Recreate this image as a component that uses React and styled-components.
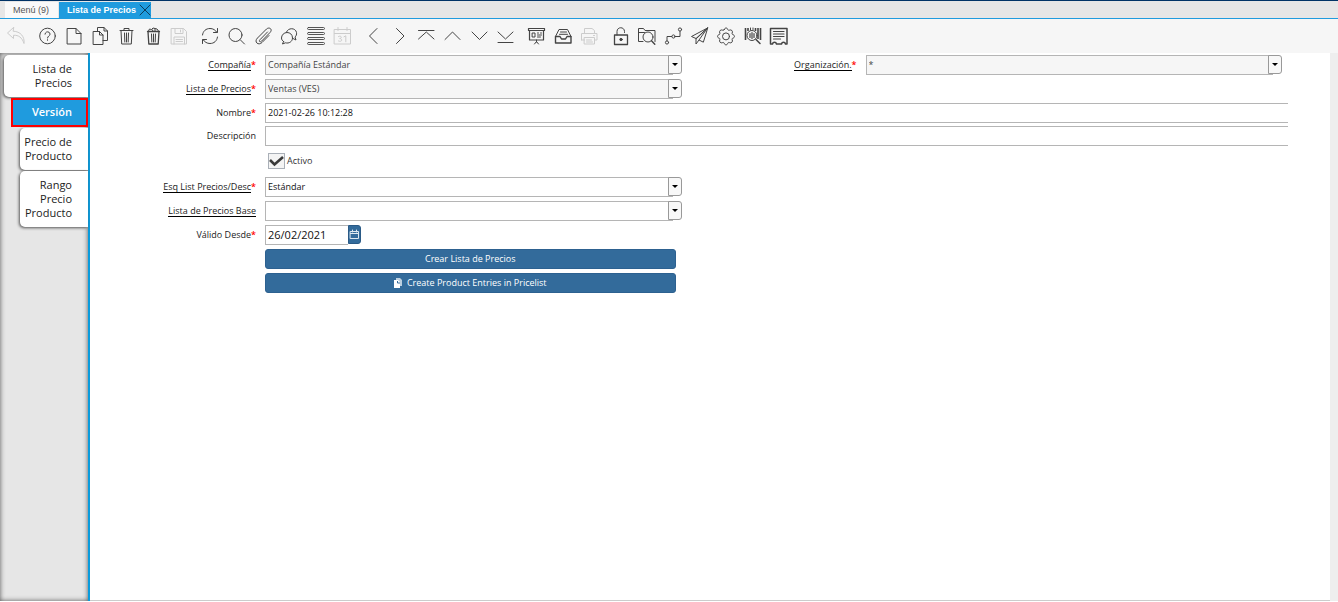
import React from "react";
import styled, { createGlobalStyle, css } from "styled-components";

const Global = createGlobalStyle`
  *, *::before, *::after { box-sizing: border-box; }
  html, body { margin: 0; padding: 0; }
  body {
    background: #fff;
    color: #333;
    font-family: "Open Sans", "Noto Sans", sans-serif;
    font-size: 9px;
    line-height: 14px;
  }
  button, input, select { font: inherit; color: inherit; margin: 0; }
`;

const Page = styled.div`
  min-height: 100vh;
  display: flex;
  flex-direction: column;
`;

/* Window tabs */
const TabBar = styled.nav`
  display: flex;
  gap: 1px;
  height: 19px;
  padding: 1px 5px 0;
  background: #e6e6e6;
  border-top: 1px solid #003366;
  border-bottom: 1px solid #1f9bde;
  font-family: "Liberation Sans", Arial, sans-serif;
`;

const WindowTab = styled.div`
  display: flex;
  align-items: center;
  padding: 0 ${(p) => (p.$active ? "0" : "9px")} 0 8px;
  background: ${(p) => (p.$active ? "#1f9bde" : "#f9f9f9")};
  color: ${(p) => (p.$active ? "#fff" : "#555")};
  font-weight: ${(p) => (p.$active ? "bold" : "normal")};
`;

const TabTitle = styled.button`
  padding: 0;
  border: 0;
  background: none;
`;

const TabClose = styled.button`
  display: flex;
  margin-left: 3px;
  padding: 0;
  border: 0;
  background: none;
  color: #0d3d5c;
`;

/* Toolbar */
const Toolbar = styled.div`
  display: flex;
  align-items: center;
  gap: 7px;
  height: 34px;
  padding-left: 4px;
  background: #f6f6f6;
`;

const ToolGroup = styled.div`
  display: flex;
  justify-content: space-between;
  width: ${(p) => p.$width}px;
`;

const ToolButton = styled.button`
  display: flex;
  align-items: center;
  justify-content: center;
  width: 24px;
  height: 24px;
  padding: 0;
  border: 0;
  background: none;
  color: #444;
  &:disabled { color: #ccc; }
`;

/* Body */
const Body = styled.div`
  flex: 1;
  display: flex;
  margin-bottom: 1px;
`;

const Sidebar = styled.nav`
  display: flex;
  flex-direction: column;
  align-items: flex-end;
  flex: none;
  width: 90px;
  padding-top: 2px;
  background: #e6e6e6;
  border-right: 2px solid #0a9bdc;
  box-shadow: inset 0 0 5px #555;
`;

const SideTab = styled.button`
  width: ${(p) => 84 - p.$level * 8}px;
  padding: 7px 16px 7px 2px;
  border: 0;
  border-radius: 5px 0 0 5px;
  background: #fff;
  box-shadow: -1px 1px 3px #555;
  color: #222;
  font-size: 11px;
  line-height: 14px;
  text-align: right;
  & + & { margin-top: ${(p) => (p.$spaced ? "1px" : "0")}; }
  ${(p) =>
    p.$active &&
    css`
      width: 77px;
      padding: 5px 14px 6px 2px;
      border: 2px solid #ff0000;
      border-radius: 0;
      background: #1f9bde;
      box-shadow: none;
      color: #fff;
      font-weight: 600;
    `}
`;

const Panel = styled.main`
  flex: 1;
  min-width: 0;
  padding: 2px 42px 0 0;
  border-bottom: 1px solid #ccc;
`;

const ScrollTrack = styled.div`
  flex: none;
  width: 8px;
  background: #eee;
`;

const Row = styled.div`
  display: grid;
  grid-template-columns: 166px minmax(0, 1fr) 160px minmax(0, 1fr);
  column-gap: 9px;
  align-items: center;
  padding-bottom: ${(p) => p.$gap || 4}px;
`;

const Label = styled.label`
  text-align: right;
  color: #222;
`;

const LabelText = styled.span`
  ${(p) =>
    p.$link &&
    css`
      border-bottom: 1px solid #000;
      display: inline-block;
      line-height: 10px;
    `}
`;

const Required = styled.span`
  color: #f00;
  font-weight: 600;
`;

const fieldBox = css`
  height: 20px;
  padding: 0 2px;
  border: 1px solid #b5b5b5;
  border-radius: 0;
  background: #fff;
  color: #111;
  outline: 0;
`;

const TextInput = styled.input`
  ${fieldBox}
  width: 100%;
  grid-column: 2 / -1;
  padding-bottom: 1px;
  border-right: 0;
`;

const ComboBox = styled.div`
  display: flex;
  margin-right: 6px;
`;

const ComboSelect = styled.select`
  ${fieldBox}
  flex: 1;
  min-width: 0;
  appearance: none;
  &:disabled {
    background: #f6f6f6;
    color: #444;
    opacity: 1;
  }
`;

const ComboArrow = styled.span`
  display: flex;
  align-items: center;
  justify-content: center;
  flex: none;
  width: 14px;
  height: 19px;
  margin-left: -5px;
  border: 1px solid #999;
  border-radius: 0 3px 3px 0;
  background: #f8f8f8;
  pointer-events: none;
  z-index: 1;
  &::after {
    content: "";
    border: 3px solid transparent;
    border-top-color: #000;
    border-bottom: 0;
  }
`;

const CheckRow = styled.div`
  display: flex;
  align-items: center;
  gap: 2px;
  height: 24px;
  padding: 0 0 1px 3px;
  grid-column: 2;
`;

const CheckMark = styled.span`
  display: grid;
  width: 17px;
  height: 16px;
  svg, input { grid-area: 1 / 1; }
  svg { pointer-events: none; }
`;

const CheckInput = styled.input`
  appearance: none;
  width: 17px;
  height: 16px;
  border: 1px solid #aab0b8;
  background: #f4f4f4;
`;

const DateBox = styled.div`
  display: flex;
  align-items: flex-start;
`;

const DateInput = styled.input`
  ${fieldBox}
  width: 83px;
  padding-bottom: 1px;
  border-right: 0;
  font-size: 11px;
`;

const DateButton = styled.button`
  display: flex;
  align-items: center;
  justify-content: center;
  width: 13px;
  height: 19px;
  padding: 0;
  border: 1px solid #2a5a86;
  border-radius: 0 3px 3px 0;
  background: #336b9b;
  color: #dde8f0;
`;

const ActionButton = styled.button`
  display: flex;
  align-items: center;
  justify-content: center;
  gap: 5px;
  grid-column: 2;
  height: 20px;
  margin-right: 12px;
  padding: 0 0 1px;
  border: 1px solid #2d6190;
  border-radius: 3px;
  background: #336b9b;
  color: #fff;
`;

const Svg = ({ children, size = 20, width = 1 }) => (
  <svg
    width={size}
    height={size}
    viewBox={`0 0 ${size} ${size}`}
    fill="none"
    stroke="currentColor"
    strokeWidth={width}
    strokeLinecap="round"
    strokeLinejoin="round"
    aria-hidden="true"
  >
    {children}
  </svg>
);

const icons = {
  undo: <path d="M7.500 1.500 1.500 7l6 5.500V9.300c5-.3 8.500 2 10.500 8.200.8-7-3.500-12-10.500-12.300z" />,
  help: (
    <>
      <circle cx="10.500" cy="10" r="7.800" />
      <path d="M8 8.200c0-3.200 5-3.200 5 0 0 1.800-2.500 1.800-2.500 3.800M10.500 13.700v.6" />
    </>
  ),
  doc: <path d="M4.500 2.500h8.500l5 5v10.500H4.500zM13 2.500v5h5" />,
  copy: <path d="M7.500 5V1.500H14L17.500 5v9.500H13M14 1.500V5h3.500M3.500 5.500h6L13 9v9.500H3.500zM9.500 5.500V9H13" />,
  trash: <path d="M4 4.500h13M8 4.500V2.500h5v2M5 4.500l.7 13.500h9.600L16 4.500M8.500 7l.3 9M10.500 7v9M12.500 7l-.3 9" />,
  trashFull: (
    <>
      <path d="M4.500 5.500h12M5 5.500 5.800 18h9.400L16 5.500" strokeWidth="1.300" />
      <path d="M5.500 5 6.500 3 8.500 3.500l1.500-1.500 2 .5 2 .5 1.500 2M8.500 8l.3 8M10.500 8v8M12.500 8l-.3 8M9 3.500l1 1.500M12 3v2" />
    </>
  ),
  save: <path d="M2.500 2.500H14.500l3 3v12.500H2.500zM6 2.500v5h8v-5M11.500 4v2M5 18v-7h10.500v7M7 13.500h6.500M7 15.500h6.500" />,
  refresh: <path d="M2.500 9C3 5 6 2.500 10 2.500c3 0 5.500 1.500 7 4M17.500 2.500v4h-4M17.500 11c-.5 4-3.500 6.500-7.500 6.500-3 0-5.500-1.500-7-4M2.500 17.500v-4h4" />,
  search: (
    <>
      <circle cx="9.500" cy="9" r="6.500" />
      <path d="m14.200 13.700 4.300 4.300" />
    </>
  ),
  clip: <path d="m14.500 6-7.500 7.700c-1.500 1.500 0 3 1.500 1.500L17 6.500c3-3-.5-6-3.500-3.500L4.500 12c-4 4 1 8 4.500 4.500L16 9.500" />,
  chat: <path d="M7.500 6C9 1.500 16.500 1.500 17.500 6.500c.4 2-.4 3.500-1.500 4.500l1 3-3-1.500M4.500 15.500 3.500 18l3-1.200c3.500 1 7-1.300 7-4.800S11 6.500 8 6.500s-5.500 2.500-5.500 5.500c0 1.500.8 2.700 2 3.500z" />,
  list: (
    <>
      <rect x="1.500" y="2" width="17" height="3" rx="1.500" />
      <rect x="1.500" y="8.500" width="17" height="3" rx="1.500" />
      <rect x="1.500" y="15" width="17" height="3" rx="1.500" />
    </>
  ),
  calendar: (
    <>
      <path d="M2.500 3.500h16v14.500h-16zM2.500 7.500h16M6 1.500v3M15 1.500v3" />
      <path d="M6.500 10.500c3-1.500 4 1.800 1.200 2 3.300.2 2.300 4.200-1.200 2.500M12 10.800l1.800-1v6" />
    </>
  ),
  left: <path d="M14 2.500 6.500 10l7.500 7.500" />,
  right: <path d="m7.500 2.500 7.500 7.500-7.500 7.500" />,
  first: <path d="M2.500 4.500h15.500M2.500 13 10.300 6 18 13" />,
  up: <path d="m3 13.500 7.500-7.500 7.500 7.500" />,
  down: <path d="m3 6 7.500 7.500L18 6" />,
  last: <path d="m3 6 7.500 7L18 6M3 16.500h15" />,
  board: (
    <>
      <path d="M2.500 2.500h16v2h-16zM3.500 4.500v9.500h14V4.500" strokeWidth="1.200" />
      <path d="M6.500 7H9v4H6.500zM11.500 7h1M14.500 7h1M11.500 9h4M11.500 11h3M10.500 14v2M10.500 15.500 8.500 18M10.500 15.500 12.500 18" />
    </>
  ),
  inbox: (
    <>
      <path d="M2.500 10.500h4.500l1.500 2.500h4l1.500-2.500h4v6.500h-15.500z" strokeWidth="1.400" />
      <path d="M2.500 10.500 6 3.500h8.500l3.500 7M7.500 6h6M6.500 8.300h8" />
    </>
  ),
  print: <path d="M5.500 7V2.500h7.500l2.500 2V7M2.500 14V7.500h15.500V14h-2.500M2.500 14H5.500M5.500 11.500h10V18h-10zM7.500 14h5M7.500 16h6M14.500 9.500h1" />,
  lock: (
    <>
      <path d="M4.500 9h13v9.500h-13z" strokeWidth="1.300" />
      <path d="M7 9V5.500c0-5 7.500-5 7.500 0V6.500" />
      <circle cx="11" cy="13.500" r="1.200" fill="currentColor" />
    </>
  ),
  folder: (
    <>
      <path d="M7 15.500H2.500V2.500h5l1.500 2H19v11M2.500 6.500h6" />
      <circle cx="12" cy="11" r="5" />
      <path d="m15.500 14.700 3.300 3.500" strokeWidth="1.400" />
    </>
  ),
  flow: (
    <>
      <circle cx="4" cy="16.500" r="1.600" />
      <circle cx="10.500" cy="10.500" r="1.600" />
      <circle cx="17" cy="3.500" r="1.600" />
      <path d="M4 14.700V10.500h4.700M12.300 10.500h4.700V5.300" />
    </>
  ),
  send: <path d="M18.500 2 2.500 10.500 7 12.500zM18.500 2 7 12.500V18l3-4 4 2zM18.500 2 10 14" />,
  gear: (
    <>
      <path d="M9.200 3.600c.4-2.200 3.200-2.200 3.600 0 .3.700.8.900 1.500.600 2-1 3.900.9 2.900 2.900-.3.700-.1 1.200.6 1.500 2.200.4 2.200 3.200 0 3.600-.7.300-.9.800-.6 1.500 1 2-.9 3.900-2.900 2.900-.7-.3-1.200-.1-1.500.6-.4 2.200-3.200 2.200-3.600 0-.3-.7-.8-.9-1.500-.6-2 1-3.900-.9-2.900-2.900.3-.7.1-1.200-.6-1.500-2.200-.4-2.200-3.200 0-3.600.7-.3.900-.8.600-1.500-1-2 .9-3.900 2.900-2.900.7.300 1.200.1 1.500-.6z" />
      <circle cx="11" cy="10.400" r="3.500" />
    </>
  ),
  barcode: (
    <>
      <path d="M3.500 2v12M6 2v3M13.500 2v3M16 2v11M18.500 2v12" strokeWidth="1.600" strokeLinecap="butt" />
      <path d="M8.500 2v2M11 2v1.500" />
      <circle cx="10" cy="9.500" r="5" />
      <path d="M8 7.500v4M10 6.500v6M12 7.500v4" strokeWidth="1.200" />
      <path d="m14 13.500 4 4" strokeWidth="1.500" />
    </>
  ),
  receipt: (
    <>
      <path d="M2.500 2.500h16.500v15.500h-1.500c-.5-2.500-3.500-2.500-4 0h-5c-.5-2.500-3.500-2.500-4 0H2.500z" strokeWidth="1.500" />
      <path d="M5.500 5.500h10.500M5.500 8h10.500M5.500 10.500h10.500M5.500 13h7" strokeWidth="1.200" />
    </>
  ),
};

/* The grid icon has four bars on an even pitch. */
icons.list = (
  <>
    {[1, 6, 11, 16].map((y) => (
      <rect key={y} x="1.500" y={y + 0.5} width="17" height="2" rx="1" strokeWidth="0.900" />
    ))}
  </>
);

const undoTool = ["undo", "Deshacer", true];
const toolGroups = [
  {
    width: 156,
    tools: [["help", "Ayuda"], ["doc", "Nuevo"], ["copy", "Copiar"], ["trash", "Borrar"], ["trashFull", "Borrar selección"], ["save", "Guardar", true]],
  },
  {
    width: 156,
    tools: [["refresh", "Refrescar"], ["search", "Buscar"], ["clip", "Anexos"], ["chat", "Chat"], ["list", "Rejilla"], ["calendar", "Calendario", true]],
  },
  {
    width: 156,
    tools: [["left", "Padre"], ["right", "Detalle"], ["first", "Primero"], ["up", "Anterior"], ["down", "Siguiente"], ["last", "Último"]],
  },
  {
    width: 77,
    tools: [["board", "Informe"], ["inbox", "Archivo"], ["print", "Imprimir", true]],
  },
  {
    width: 182,
    tools: [["lock", "Bloquear"], ["folder", "Acercar"], ["flow", "Flujos"], ["send", "Solicitudes"], ["gear", "Proceso"], ["barcode", "Producto"], ["receipt", "Personalizar"]],
  },
];

const Tool = ({ tool: [icon, name, disabled] }) => (
  <ToolButton aria-label={name} disabled={disabled}>
    <Svg>{icons[icon]}</Svg>
  </ToolButton>
);

const FieldLabel = ({ id, text, link, required }) => (
  <Label htmlFor={id}>
    <LabelText $link={link}>{text}</LabelText>
    {required && <Required>*</Required>}
  </Label>
);

const Combo = ({ id, value, disabled }) => (
  <ComboBox>
    <ComboSelect id={id} disabled={disabled} defaultValue={value}>
      <option value={value}>{value}</option>
    </ComboSelect>
    <ComboArrow />
  </ComboBox>
);

export default function App() {
  return (
    <Page>
      <Global />
      <TabBar>
        <WindowTab>
          <TabTitle>Menú (9)</TabTitle>
        </WindowTab>
        <WindowTab $active>
          <TabTitle>Lista de Precios</TabTitle>
          <TabClose aria-label="Cerrar">
            <Svg size={12}>
              <path d="M1 1l10 10M11 1l-10 10" />
            </Svg>
          </TabClose>
        </WindowTab>
      </TabBar>

      <Toolbar>
        <Tool tool={undoTool} />
        {toolGroups.map((group, i) => (
          <ToolGroup key={i} $width={group.width}>
            {group.tools.map((tool) => (
              <Tool key={tool[0]} tool={tool} />
            ))}
          </ToolGroup>
        ))}
      </Toolbar>

      <Body>
        <Sidebar>
          <SideTab $level={0}>Lista de Precios</SideTab>
          <SideTab $level={1} $active>Versión</SideTab>
          <SideTab $level={2}>Precio de Producto</SideTab>
          <SideTab $level={2} $spaced>Rango Precio Producto</SideTab>
        </Sidebar>

        <Panel>
          <Row>
            <FieldLabel id="client" text="Compañía" link required />
            <Combo id="client" value="Compañía Estándar" disabled />
            <FieldLabel id="org" text="Organización." link required />
            <Combo id="org" value="*" disabled />
          </Row>
          <Row>
            <FieldLabel id="pricelist" text="Lista de Precios" link required />
            <Combo id="pricelist" value="Ventas (VES)" disabled />
          </Row>
          <Row $gap={3}>
            <FieldLabel id="name" text="Nombre" required />
            <TextInput id="name" defaultValue="2021-02-26 10:12:28" />
          </Row>
          <Row $gap={3}>
            <FieldLabel id="description" text="Descripción" />
            <TextInput id="description" />
          </Row>
          <Row>
            <CheckRow>
              <CheckMark>
                <CheckInput id="active" type="checkbox" defaultChecked />
                <svg width="17" height="16" viewBox="0 0 17 16" aria-hidden="true">
                  <path d="M2 7 6.500 11.500 15 4" fill="none" stroke="#3a3a3a" strokeWidth="2.600" />
                </svg>
              </CheckMark>
              <label htmlFor="active">Activo</label>
            </CheckRow>
          </Row>
          <Row>
            <FieldLabel id="schema" text="Esq List Precios/Desc" link required />
            <Combo id="schema" value="Estándar" />
          </Row>
          <Row>
            <FieldLabel id="base" text="Lista de Precios Base" link />
            <Combo id="base" value="" />
          </Row>
          <Row>
            <FieldLabel id="valid" text="Válido Desde" required />
            <DateBox>
              <DateInput id="valid" defaultValue="26/02/2021" />
              <DateButton aria-label="Elegir fecha">
                <Svg size={11}>
                  <path d="M1.500 2.500h8v7h-8zM1.500 4.500h8M3.500 1v2M7.500 1v2" />
                </Svg>
              </DateButton>
            </DateBox>
          </Row>
          <Row>
            <ActionButton>Crear Lista de Precios</ActionButton>
          </Row>
          <Row>
            <ActionButton>
              <svg width="8" height="10" viewBox="0 0 8 10" aria-hidden="true">
                <path d="M2 0h4l2 2v6H2z" fill="#bcd0e0" />
                <path d="M0 2h4l2 2v6H0z" fill="#fff" />
                <path d="M3.500 3v2H6" fill="none" stroke="#336b9b" />
              </svg>
              Create Product Entries in Pricelist
            </ActionButton>
          </Row>
        </Panel>
        <ScrollTrack />
      </Body>
    </Page>
  );
}
